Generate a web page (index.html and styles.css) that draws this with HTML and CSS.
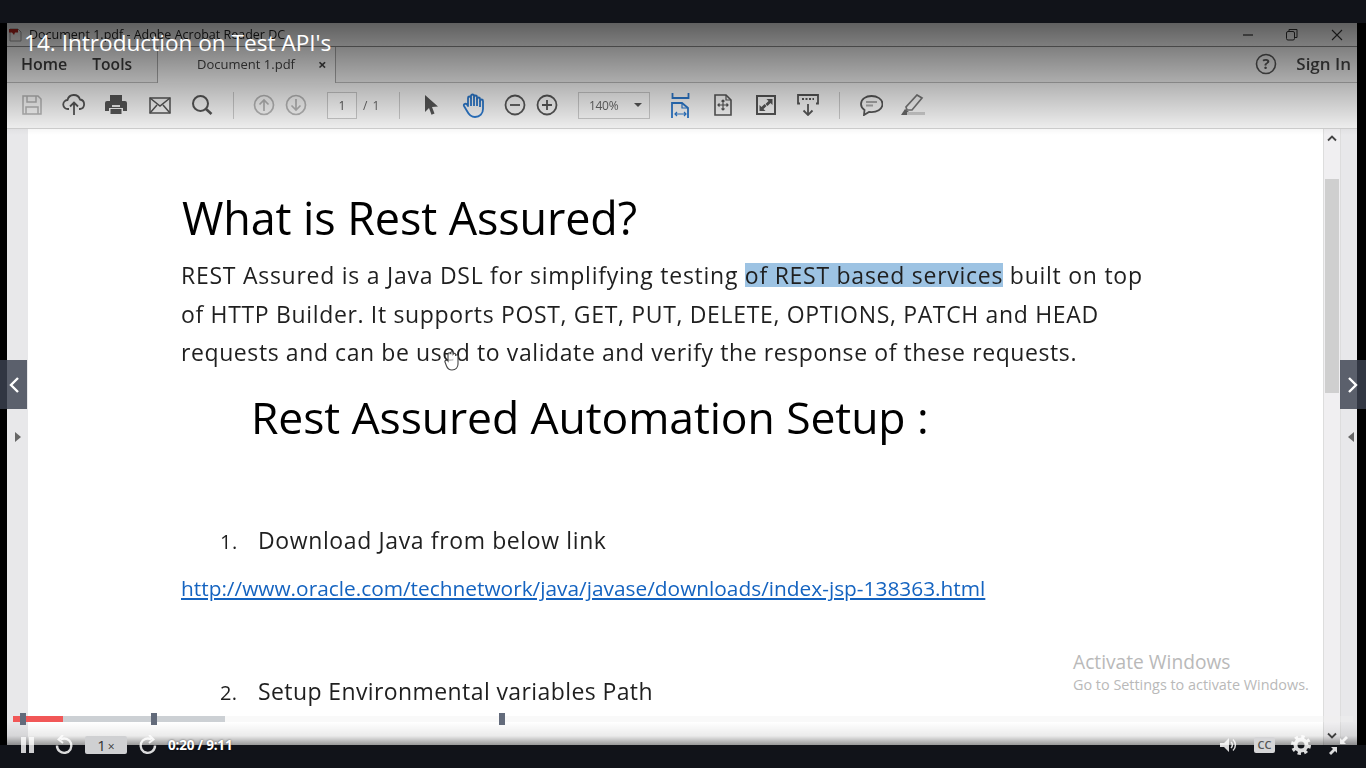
FILE: index.html
```html
<!DOCTYPE html>
<html lang="en">
<head>
<meta charset="utf-8">
<title>14. Introduction on Test API's</title>
<link rel="stylesheet" href="styles.css">
</head>
<body>
<div class="stage">
  <div class="band"></div>
  <div class="middle">
    <div class="edge edge-left"></div>
    <div class="window">
      <div class="titlebar">
        <svg class="pdf-icon" width="13" height="14" viewBox="0 0 13 14"><path d="M1 1h8l3 3v9H1z" fill="#f3f0ee" stroke="#999"/><path d="M0 1h9v3.500H6L5 7 3 4.500H0z" fill="#b3261e"/></svg>
        <span class="title-text">Document 1.pdf - Adobe Acrobat Reader DC</span>
        <div class="winctl">
          <svg width="14" height="14" viewBox="0 0 14 14"><path d="M2 7h10" stroke="#333" stroke-width="1.200"/></svg>
          <svg width="14" height="14" viewBox="0 0 14 14"><path d="M4 3.500V1.500h8v8h-2.500" fill="none" stroke="#333"/><rect x="1.500" y="3.500" width="8" height="8.500" rx="1.500" fill="none" stroke="#333"/></svg>
          <svg width="14" height="14" viewBox="0 0 14 14"><path d="M2 2l10 10M12 2L2 12" stroke="#333" stroke-width="1.100"/></svg>
        </div>
      </div>
      <div class="tabbar">
        <span class="nav-tab nav-home">Home</span>
        <span class="nav-tab nav-tools">Tools</span>
        <div class="doc-tab"><span class="doc-name">Document 1.pdf</span><span class="doc-close">×</span></div>
        <svg class="help" width="22" height="22" viewBox="0 0 22 22"><circle cx="11" cy="11" r="9.500" fill="none" stroke="#555" stroke-width="1.600"/><text x="11" y="16" text-anchor="middle" class="help-q">?</text></svg>
        <span class="signin">Sign In</span>
      </div>
      <div class="toolbar">
        <span class="tool"><svg width="20" height="20" viewBox="0 0 20 20" fill="none" stroke="#b4b4b4" stroke-width="1.500"><path d="M1 1h15l3 3v15H1z"/><path d="M5 1v6h9V1M4 19v-7h12v7"/></svg></span>
        <span class="tool"><svg width="24" height="22" viewBox="0 0 24 22" fill="none" stroke="#555" stroke-width="1.800"><path d="M7 15H6a4.500 4.500 0 0 1-.5-9A6.500 6.500 0 0 1 18 5.500 4.800 4.800 0 0 1 18 15h-1"/><path d="M12 21V9M8 12.500l4-4 4 4"/></svg></span>
        <span class="tool"><svg width="22" height="20" viewBox="0 0 22 20"><path d="M5 0h12v6H5zM2 6h18a2 2 0 0 1 2 2v8h-4v-3H4v3H0V8a2 2 0 0 1 2-2z" fill="#555"/><path d="M5.500 14h11v5h-11z" fill="#555"/><path d="M7 10h8v2H7z" fill="#eee"/></svg></span>
        <span class="tool m2"><svg width="22" height="17" viewBox="0 0 22 17" fill="none" stroke="#555" stroke-width="1.500"><rect x="1" y="1" width="20" height="15"/><path d="M1 1l10 8 10-8M1 16l7-8M21 16l-7-8"/></svg></span>
        <span class="tool"><svg width="22" height="22" viewBox="0 0 22 22" fill="none" stroke="#555" stroke-width="2"><circle cx="9.500" cy="9.500" r="7.500"/><path d="M15 15l5.500 5" stroke-width="2.600"/></svg></span>
        <span class="sep m10"></span>
        <span class="tool narrow m14"><svg width="22" height="22" viewBox="0 0 22 22" fill="none" stroke="#b4b4b4" stroke-width="1.700"><circle cx="11" cy="11" r="9.500"/><path d="M11 17V6M6.500 10.500L11 6l4.500 4.500"/></svg></span>
        <span class="tool narrow"><svg width="22" height="22" viewBox="0 0 22 22" fill="none" stroke="#b4b4b4" stroke-width="1.700"><circle cx="11" cy="11" r="9.500"/><path d="M11 5v11M6.500 11.500L11 16l4.500-4.500"/></svg></span>
        <span class="pagebox m15">1</span>
        <span class="pagecount">/ 1</span>
        <span class="sep m19"></span>
        <span class="tool narrow m15"><svg width="16" height="20" viewBox="0 0 16 20"><path d="M2 0l13 11.500-6 .5 2.500 6.500-3 1.200L6 13l-4 4z" fill="#555"/></svg></span>
        <span class="tool m5"><svg width="24" height="25" viewBox="0 0 24 25" fill="none" stroke="#2b76c8" stroke-width="1.800" stroke-linejoin="round"><path d="M7 13V5a1.500 1.500 0 0 1 3 0V3a1.500 1.500 0 0 1 3 0v1a1.500 1.500 0 0 1 3 0v2a1.500 1.500 0 0 1 3 0v2a1.500 1.500 0 0 1 3 0v8c0 4.500-3 8-8 8-4 0-6-2-8-6l-3-5c-1-1.600 1.500-3.200 3-1.500z"/><path d="M10 5v8M13 4v9M16 5v8M19 8v6"/></svg></span>
        <span class="tool narrow m5"><svg width="22" height="22" viewBox="0 0 22 22" fill="none" stroke="#555" stroke-width="1.800"><circle cx="11" cy="11" r="9.500"/><path d="M6 11h10"/></svg></span>
        <span class="tool narrow"><svg width="22" height="22" viewBox="0 0 22 22" fill="none" stroke="#555" stroke-width="1.800"><circle cx="11" cy="11" r="9.500"/><path d="M6 11h10M11 6v10"/></svg></span>
        <span class="zoombox m15"><span>140%</span><i class="zoom-caret"></i></span>
        <span class="tool m9"><svg width="19" height="25" viewBox="0 0 19 25" fill="none" stroke="#2b76c8" stroke-width="1.800"><path d="M1.500 0v5h16V0M1 25V10h10l6 5v10"/><path d="M11 10v5h6M4 21h11M6 19l-2 2 2 2M13 19l2 2-2 2" stroke-width="1.200"/></svg></span>
        <span class="tool m1"><svg width="18" height="22" viewBox="0 0 18 22" fill="none" stroke="#555" stroke-width="1.600"><path d="M1 1h11l5 5v15H1z"/><path d="M12 1v5h5M9 6v10M4 11h10M7.500 7.500L9 6l1.500 1.500M7.500 14.500L9 16l1.500-1.500M5.500 9.500L4 11l1.500 1.500M12.500 9.500L14 11l-1.500 1.500" stroke-width="1.200"/></svg></span>
        <span class="tool m1"><svg width="20" height="20" viewBox="0 0 20 20"><rect x="1" y="1" width="18" height="18" fill="none" stroke="#555" stroke-width="2"/><path d="M10.500 4H16.500v6l-2-2-3 3-2-2 3-3zM9.500 16H3.500v-6l2 2 3-3 2 2-3 3z" fill="#555"/></svg></span>
        <span class="tool"><svg width="22" height="22" viewBox="0 0 22 22" fill="none" stroke="#555" stroke-width="1.800"><path d="M3 9.500H1V1h20v8.500h-2"/><path d="M11 10v11M6.500 16.500L11 21l4.500-4.500"/><path d="M5 5h12" stroke-dasharray="2 1.500" stroke-width="2"/></svg></span>
        <span class="sep m10"></span>
        <span class="tool m10"><svg width="23" height="21" viewBox="0 0 23 21" fill="none" stroke="#555" stroke-width="1.800"><path d="M11.500 1C6 1 1 4 1 9c0 2.500 1.300 4.500 3.500 6L4 20l5-3c8 1 13.500-3 13.500-8S17 1 11.500 1z"/><path d="M6 7h11M6 10.500h7" stroke="#aaa"/></svg></span>
        <span class="tool"><svg width="24" height="22" viewBox="0 0 24 22"><path d="M16 1l5 3L11 16H6l-1-3z" fill="none" stroke="#777" stroke-width="1.700"/><path d="M0 21l4-6 4 3-2 3z" fill="#666"/><path d="M6 18h18v3H6z" fill="#ccc"/></svg></span>
      </div>
      <div class="docarea">
        <div class="pane pane-left"></div>
        <div class="page">
          <h1 class="doc-h1">What is Rest Assured?</h1>
          <p class="doc-p">REST Assured is a Java DSL for simplifying testing <span class="hl">of REST based services</span> built on top<br><span class="line-two">of HTTP Builder. It supports POST, GET, PUT, DELETE, OPTIONS, PATCH and HEAD</span><br><span class="line-three">requests and can be used to validate and verify the response of these requests.</span></p>
          <h2 class="doc-h2">Rest Assured Automation Setup :</h2>
          <div class="step step-one"><span class="step-num">1.</span><span>Download Java from below link</span></div>
          <a class="doc-link" href="#">http://www.oracle.com/technetwork/java/javase/downloads/index-jsp-138363.html</a>
          <div class="step step-two"><span class="step-num">2.</span><span>Setup Environmental variables Path</span></div>
        </div>
        <div class="scroll">
          <svg class="caret-up" width="10" height="7" viewBox="0 0 10 7"><path d="M1 5.500l4-4 4 4" fill="none" stroke="#444" stroke-width="1.800"/></svg>
          <div class="thumb"></div>
          <svg class="caret-down" width="10" height="7" viewBox="0 0 10 7"><path d="M1 1.500l4 4 4-4" fill="none" stroke="#444" stroke-width="1.800"/></svg>
        </div>
        <div class="pane pane-right"></div>
      </div>
    </div>
    <div class="edge edge-right"></div>
  </div>
  <div class="band"></div>

  <div class="shade-top"></div>
  <div class="shade-bottom"></div>

  <div class="video-title">14. Introduction on Test API's</div>

  <button class="navbtn nav-prev"><svg width="12" height="18" viewBox="0 0 12 18"><path d="M10 2L3 9l7 7" fill="none" stroke="#fff" stroke-width="2.400"/></svg></button>
  <button class="navbtn nav-next"><svg width="12" height="18" viewBox="0 0 12 18"><path d="M2 2l7 7-7 7" fill="none" stroke="#fff" stroke-width="2.400"/></svg></button>
  <i class="tri tri-left"></i>
  <i class="tri tri-right"></i>

  <svg class="hand-cursor" width="16" height="20" viewBox="0 0 16 20" fill="rgba(255,255,255,.75)" stroke="#444" stroke-width="1.100"><path d="M4 10V3a1.300 1.300 0 0 1 2.600 0V2a1.300 1.300 0 0 1 2.600 0v1a1.300 1.300 0 0 1 2.400.500V5a1.200 1.200 0 0 1 2.400 0v8c0 3-2 6-6 6-3 0-4.500-1.500-5.500-4L1 11c-.8-1.500 2-2.500 3-1z"/></svg>

  <div class="watermark">
    <div class="wm-big">Activate Windows</div>
    <div class="wm-small">Go to Settings to activate Windows.</div>
  </div>

  <div class="progress">
    <div class="buffered"><div class="played"></div></div>
    <i class="marker marker-a"></i>
    <i class="marker marker-b"></i>
    <i class="marker marker-c"></i>
  </div>

  <div class="controls">
    <svg class="ctl-pause" width="13" height="16" viewBox="0 0 13 16"><path d="M0 0h5v16H0zM8 0h5v16H8z" fill="#fff" fill-opacity=".8"/></svg>
    <svg class="ctl-back" width="20" height="20" viewBox="0 0 20 20" fill="none" stroke="#fff" stroke-opacity=".85" stroke-width="2.400"><path d="M6.500 4.500A7.200 7.200 0 1 1 3 10.500"/><path d="M9 0L4.500 4.500 9 8" stroke-width="2"/></svg>
    <span class="speed">1<small>×</small></span>
    <svg class="ctl-fwd" width="20" height="20" viewBox="0 0 20 20" fill="none" stroke="#fff" stroke-opacity=".85" stroke-width="2.400"><path d="M13.500 4.500A7.200 7.200 0 1 0 17 10.500"/><path d="M11 0l4.500 4.500L11 8" stroke-width="2"/></svg>
    <span class="time">0:20 / 9:11</span>
    <span class="ctl-spacer"></span>
    <svg class="ctl-vol" width="20" height="16" viewBox="0 0 20 16"><path d="M0 6h4l5-5v14l-5-5H0z" fill="#fff" fill-opacity=".85"/><path d="M11 5a4 4 0 0 1 0 6M13 2.500a7.500 7.500 0 0 1 0 11" fill="none" stroke="#fff" stroke-opacity=".85" stroke-width="1.500"/></svg>
    <span class="cc">CC</span>
    <svg class="ctl-gear" width="20" height="20" viewBox="0 0 20 20" fill="none" stroke="#fff" stroke-opacity=".85"><circle cx="10" cy="10" r="5.500" stroke-width="4"/><circle cx="10" cy="10" r="8.500" stroke-width="3" stroke-dasharray="3.340 3.340"/></svg>
    <svg class="ctl-collapse" width="21" height="21" viewBox="0 0 21 21" fill="#fff" fill-opacity=".85"><path d="M12 9V3l2 2 4-4 2 2-4 4 2 2zM9 12v6l-2-2-4 4-2-2 4-4-2-2z"/></svg>
  </div>
</div>
</body>
</html>
```
FILE: styles.css
```css
* { box-sizing: border-box; }
html, body { margin: 0; padding: 0; background: #000; overflow: hidden; }
.stage { position: relative; width: 1366px; height: 768px; overflow: hidden; background: #000; font-family: "Open Sans", sans-serif; }
.band { height: 23px; background: #111319; }
.middle { display: flex; height: 722px; }
.edge { background: #000; }
.edge-left { width: 7px; }
.edge-right { width: 9px; }
.window { width: 1350px; display: flex; flex-direction: column; background: #fff; filter: blur(.35px); }

.titlebar { height: 24px; display: flex; align-items: center; padding-left: 2px; background: #f1f1f1; border-bottom: 1px solid #888; }
.pdf-icon { margin-right: 7px; }
.title-text { font-size: 12.5px; color: #222; white-space: nowrap; font-family: "Open Sans", sans-serif; }
.winctl { margin-left: auto; display: flex; gap: 30px; padding-right: 13px; }
.winctl svg:nth-child(2) { margin-right: 1px; }

.tabbar { height: 36px; padding-bottom: 2px; display: flex; align-items: center; background: #f1f1f1; border-bottom: 1px solid #bbb; }
.nav-tab { font-size: 16px; font-weight: 600; color: #3c3c3c; }
.nav-home { margin-left: 14px; }
.nav-tools { margin-left: 25px; font-size: 15.600px; }
.doc-tab { align-self: stretch; width: 179px; margin: 0 0 -3px 25px; padding: 0 0 2px 39px; display: flex; align-items: center; background: #f7f7f7; border: 1px solid #a8a8a8; border-width: 0 1px; }
.doc-name { font-size: 13px; color: #444; }
.doc-close { margin-left: 23px; font-size: 15px; font-weight: 700; color: #444; }
.help { margin-left: auto; margin-right: 19px; }
.help-q { font: 700 15px "Open Sans", sans-serif; fill: #555; }
.signin { font-size: 17px; font-weight: 600; color: #444; margin-right: 6px; }

.toolbar { height: 46px; padding: 0 0 1px 4px; display: flex; align-items: center; background: #f6f6f6; border-bottom: 1px solid #d2d2d2; }
.tool { width: 42px; display: flex; justify-content: center; align-items: center; flex: none; }
.tool.narrow { width: 32px; }
.sep { width: 1px; height: 27px; background: #c8c8c8; flex: none; }
.m1 { margin-left: 1px; }
.m2 { margin-left: 2px; }
.m5 { margin-left: 5px; }
.m9 { margin-left: 9px; }
.m10 { margin-left: 10px; }
.m14 { margin-left: 14px; }
.m15 { margin-left: 15px; }
.m19 { margin-left: 19px; }
.pagebox { width: 30px; height: 27px; display: flex; align-items: center; justify-content: center; border: 1px solid #c8c8c8; background: #fbfbfb; font-size: 12px; color: #555; flex: none; }
.pagecount { width: 17px; margin-left: 6px; font-size: 12px; color: #666; white-space: nowrap; word-spacing: 2px; flex: none; }
.zoombox { width: 72px; height: 27px; display: flex; align-items: center; justify-content: space-between; padding: 0 7px 0 10px; border: 1px solid #c8c8c8; background: #f6f6f6; font-size: 12px; color: #666; letter-spacing: -.3px; flex: none; }
.zoom-caret { width: 0; height: 0; border: 4px solid transparent; border-top: 4px solid #555; border-bottom: 0; }

.docarea { flex: 1; min-height: 0; display: flex; }
.pane { background: #e8e8ea; flex: none; }
.pane-left { width: 21px; }
.pane-right { width: 17px; border-left: 1px solid #ddd; }
.page { flex: 1; min-width: 0; overflow: hidden; padding: 59px 0 0 153px; background: #fff; color: #222; }
.doc-h1 { margin: 0 0 8px 1px; font: 500 44.900px/60px "Open Sans", sans-serif; color: #000; white-space: nowrap; letter-spacing: -.1px; }
.doc-p { margin: 0; font: 400 23px/38.500px "Open Sans", sans-serif; color: #1f1f1f; letter-spacing: .74px; white-space: nowrap; }
.line-two { letter-spacing: .66px; }
.line-three { letter-spacing: .59px; }
.hl { display: inline-block; line-height: 24px; background: #9dc3e3; }
.doc-h2 { margin: 15.500px 0 0 70px; font: 500 44.500px/60px "Open Sans", sans-serif; color: #000; white-space: nowrap; letter-spacing: -.1px; }
.step { display: flex; height: 30px; align-items: baseline; font: 400 23px/30px "Open Sans", sans-serif; color: #1f1f1f; white-space: nowrap; margin-left: 39px; }
.step-num { width: 38px; font-size: 20px; }
.step-one { margin-top: 78px; letter-spacing: .62px; }
.step-two { margin-top: 73px; letter-spacing: .4px; }
.doc-link { display: block; margin-top: 18px; font: 500 20.850px/30px "Open Sans", sans-serif; color: #1463c0; white-space: nowrap; }
.scroll { width: 17px; flex: none; display: flex; flex-direction: column; align-items: center; background: #f0eff1; border-left: 1px solid #ddd; position: relative; }
.caret-up { margin-top: 6px; }
.thumb { width: 14px; height: 214px; margin-top: 37px; background: #cfcfcf; }
.caret-down { margin-top: auto; margin-bottom: 6px; }

.shade-top { position: absolute; left: 7px; top: 23px; width: 1350px; height: 112px; background: linear-gradient(to bottom, rgba(0,0,0,.6), rgba(0,0,0,0)); pointer-events: none; }
.shade-bottom { position: absolute; left: 7px; top: 722px; width: 1350px; height: 23px; background: linear-gradient(to bottom, rgba(0,0,0,0), rgba(0,0,0,.08) 60%, rgba(0,0,0,.4)); pointer-events: none; }
.video-title { position: absolute; left: 24px; top: 26px; font-size: 22.600px; line-height: 34px; color: #fff; white-space: nowrap; }

.navbtn { position: absolute; top: 360px; width: 27px; height: 49px; padding: 0; border: 0; display: flex; align-items: center; justify-content: center; background: rgba(60,66,80,.82); }
.nav-prev { left: 0; }
.nav-next { right: 0; width: 26px; }
.tri { position: absolute; top: 432px; width: 0; height: 0; border: 5px solid transparent; }
.tri-left { left: 15px; border-left: 6px solid #666; border-right: 0; }
.tri-right { left: 1348px; border-right: 6px solid #666; border-left: 0; }
.hand-cursor { position: absolute; left: 444px; top: 351px; }

.watermark { position: absolute; left: 1073px; top: 650px; color: #b9b9b9; white-space: nowrap; }
.wm-big { font-size: 19.200px; line-height: 24px; }
.wm-small { font-size: 14.400px; line-height: 22px; }

.progress { position: absolute; left: 13px; top: 716px; width: 1340px; height: 6px; background: rgba(240,240,240,.4); }
.buffered { width: 212px; height: 6px; background: #ccd0d4; }
.played { width: 50px; height: 6px; background: #f15757; }
.marker { position: absolute; top: -3px; width: 6px; height: 12px; background: #636b7b; }
.marker-a { left: 7px; }
.marker-b { left: 138px; }
.marker-c { left: 486px; }

.controls { position: absolute; left: 21px; top: 733px; width: 1330px; height: 24px; display: flex; align-items: center; }
.ctl-back { margin-left: 20px; }
.speed { width: 42px; height: 18px; margin-left: 11px; border-radius: 2px; background: #cfd0d2; color: #333; font-size: 15px; line-height: 18px; text-align: center; }
.speed small { font-size: 12px; margin-left: 2px; }
.ctl-fwd { margin-left: 11px; }
.time { margin-left: 10px; font-size: 13.500px; font-weight: 700; color: #fff; letter-spacing: -.2px; white-space: nowrap; text-shadow: 0 0 2px rgba(0,0,0,.6); }
.ctl-spacer { flex: 1; }
.cc { width: 21px; height: 16px; margin-left: 14px; border-radius: 2px; background: #d5d5d7; color: #555; font-size: 11px; font-weight: 600; line-height: 16px; text-align: center; }
.ctl-gear { margin-left: 16px; }
.ctl-collapse { margin-left: 17px; margin-right: 2px; }
```
